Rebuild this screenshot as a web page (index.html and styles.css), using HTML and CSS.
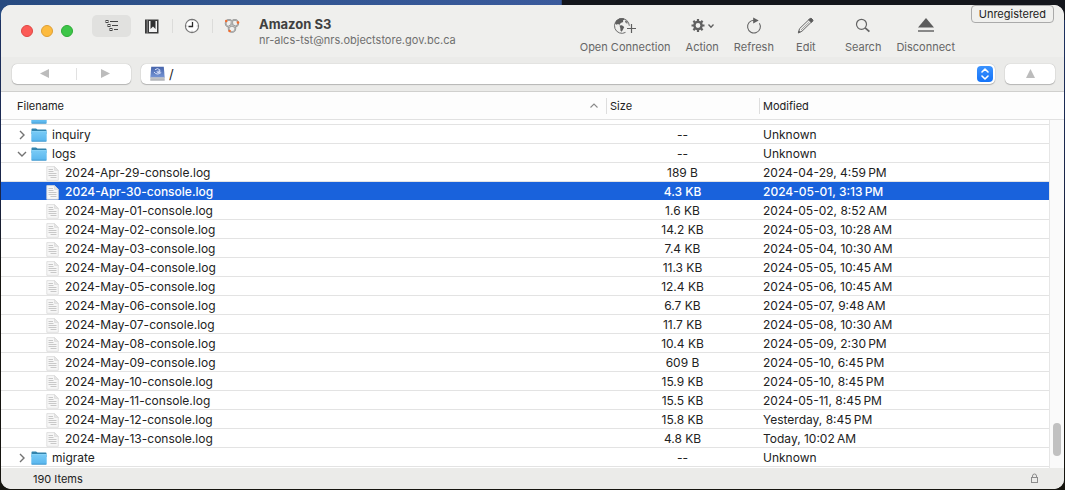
FILE: index.html
```html
<!DOCTYPE html>
<html lang="en">
<head>
<meta charset="utf-8">
<title>Amazon S3</title>
<link rel="stylesheet" href="styles.css">
<script src="files.js" defer></script>
</head>
<body>
<svg class="symbols" aria-hidden="true">
  <defs>
    <linearGradient id="folder-fill" x1="0" y1="0" x2="0" y2="1"><stop offset="0" stop-color="#79cbf6"/><stop offset="1" stop-color="#58b6ee"/></linearGradient>
    <linearGradient id="disk-fill" x1="0" y1="0" x2="0" y2="1"><stop offset="0" stop-color="#4765ab"/><stop offset="1" stop-color="#7796d6"/></linearGradient>
  </defs>
  <symbol id="folder" viewBox="0 0 16 14">
    <path d="M.5 2.2V1.3Q.5.5 1.3.5H5l1.500 1h8.2q.8 0 .8.8V6H.5z" fill="#3183ad"/>
    <path d="M.3 3.2h15.4v9.4q0 .9-.9.9H1.2q-.9 0-.9-.9z" fill="url(#folder-fill)"/>
    <path d="M.3 3.5h15.4" stroke="#95dcff" stroke-width=".7"/>
    <path d="M.6 13.2h14.8" stroke="#3d93c6" stroke-width=".8"/>
  </symbol>
  <symbol id="document" viewBox="0 0 13 15">
    <path d="M.8.6h7.700L12.300 4.400v9.900H.8z" fill="#f7f7f7" stroke="#d9d9d9" stroke-width=".8"/>
    <path d="M8.500.6v3.800h3.800z" fill="#e6e6e6" stroke="#d2d2d2" stroke-width=".5"/>
    <path d="M2.500 3.500h4.500M2.500 5.500h5M2.500 7.500h8M2.500 9.500h8M4.500 11.500h6" stroke="#c2c2c2" stroke-width=".9"/>
  </symbol>
</svg>
<main class="window">
  <header class="toolbar">
    <div class="lights">
      <button class="light close" aria-label="Close"></button>
      <button class="light minimize" aria-label="Minimize"></button>
      <button class="light expand" aria-label="Zoom"></button>
    </div>
    <div class="views">
      <button class="view active" aria-label="Outline">
        <svg width="14" height="14" viewBox="0 0 14 14" fill="none" stroke="#454545"><rect x="1" y="1.5" width="2" height="2"/><rect x="3" y="5.5" width="2" height="2"/><rect x="5" y="9.5" width="2" height="2"/><path d="M5 2.5h8M7 6.5h6M9 10.5h4"/></svg>
      </button>
      <button class="view" aria-label="Bookmarks">
        <svg width="14" height="15" viewBox="0 0 14 15"><path d="M0 .5h13.5v14H0z" fill="#3a3a3a"/><path d="M2.200.5v14" stroke="#a5a5a5" stroke-width=".8"/><path d="M4 2h8v11H4z" fill="#f3f3f3"/><path d="M5.500 2h5v8L8 7.500 5.500 10z" fill="#303030"/></svg>
      </button>
      <span class="rule"></span>
      <button class="view" aria-label="History">
        <svg width="16" height="16" viewBox="0 0 16 16"><circle cx="8" cy="8" r="6.6" fill="#fff" stroke="#777" stroke-width="1.1"/><path d="M8.500 4v4.500H4.500" fill="none" stroke="#292929" stroke-width="1.3"/><path d="M8 2.4v.8M8 12.8v.8M2.4 8h.8M12.8 8h.8" stroke="#777"/></svg>
      </button>
      <span class="rule"></span>
      <button class="view" aria-label="Bonjour">
        <svg width="16" height="16" viewBox="0 0 16 16" fill="none"><g stroke="#8a8a8a" stroke-width="1.7"><circle cx="5" cy="5.2" r="3.4"/><circle cx="10.8" cy="5.2" r="3.4"/><circle cx="8" cy="10.6" r="3.4"/></g><g stroke="#d4d4d3" stroke-width=".5"><circle cx="5" cy="5.2" r="3.4"/><circle cx="10.8" cy="5.2" r="3.4"/><circle cx="8" cy="10.6" r="3.4"/></g><g fill="#f36b2c"><circle cx="2.2" cy="3" r="1.2"/><circle cx="14" cy="4.500" r="1.3"/><circle cx="5.6" cy="13" r="1.3"/></g></svg>
      </button>
    </div>
    <div class="title">
      <h1>Amazon S3</h1>
      <p>nr-alcs-tst@nrs.objectstore.gov.bc.ca</p>
    </div>
    <nav class="actions">
      <button class="action">
        <svg width="24" height="18" viewBox="0 0 24 18"><path d="M12.500 15.400A7.400 7.400 0 1 1 16.300 8.800" fill="none" stroke="#6c6c6c"/><path d="M3.2 3.4 6.5 1.2l4 .1 1 1.3-1.6.8.3 1.5-2.5 1.2-1 1.600-2-.8-.8.8 1.6 1.2L2 6.500z" fill="#5f5f5f"/><path d="m6.500 8.600 2.400-.3 2.400 1.800-1.200 2.200-1.300 2.500-1.300-1-.2-2.800z" fill="#5f5f5f"/><path d="m12 3.500 2 .8 1 2-1.500.2-1.500-1.500z" fill="#787878"/><path d="M18.500 7v9M14 11.500h9" stroke="#5f5f5f" stroke-width="1.2"/></svg>
        Open Connection</button>
      <button class="action">
        <svg width="24" height="18" viewBox="0 0 24 18" fill="none" stroke="#606060"><circle cx="8" cy="8.500" r="3.600" stroke-width="2.4"/><path stroke-width="2.2" d="M8 4.500V2M8 15v-2.500M4 8.500H1.500M14.500 8.500H12M5.2 5.7 3.4 3.9M12.6 13.1l-1.8-1.8M5.2 11.3l-1.8 1.8M12.6 3.9l-1.8 1.8"/><path d="m18.500 7.500 2.500 2.700 2.500-2.700" stroke-width="1.3"/></svg>
        Action</button>
      <button class="action">
        <svg width="18" height="18" viewBox="0 0 18 18"><path d="M14.400 6.200A6.400 6.400 0 1 1 9 3.200" fill="none" stroke="#666" stroke-width="1.1"/><path d="M8.2.500 13.7 3.500 8.2 6.400z" fill="#5f5f5f"/></svg>
        Refresh</button>
      <button class="action edit">
        <svg width="18" height="18" viewBox="0 0 18 18" fill="none" stroke="#666"><path d="m1.500 15.700 1-4L12.8 1.8q1-.9 2.2.2 1.3 1.2.3 2.2L5 14.2z"/><path d="M4 13 12.3 5" stroke-width=".6"/><path d="m12.6 1.9 1.4-.7 2 1.8-.3 1.2-1.4 1.2-2.7-2.4z" fill="#5a5a5a"/><path d="m1.3 15.900.6-2 1.2 1.400z" fill="#555"/></svg>
        Edit</button>
      <button class="action search">
        <svg width="18" height="18" viewBox="0 0 18 18" fill="none" stroke="#646464"><circle cx="7.500" cy="7.300" r="5" stroke-width="1.2"/><path d="m11.200 10.900 4.200 3.800" stroke-width="1.8"/></svg>
        Search</button>
      <button class="action">
        <svg width="18" height="18" viewBox="0 0 18 18"><path d="M9 1 17 10.500H1z" fill="#5c5c5c"/><path d="M1 14h16" stroke="#666" stroke-width="1.4"/></svg>
        Disconnect</button>
    </nav>
    <button class="badge">Unregistered</button>
  </header>

  <div class="location">
    <div class="segments">
      <button class="back" aria-label="Back"><svg width="9" height="9" viewBox="0 0 9 9"><path d="M9 0v9L0 4.500z"/></svg></button>
      <button class="forward" aria-label="Forward"><svg width="9" height="9" viewBox="0 0 9 9"><path d="M0 0v9l9-4.500z"/></svg></button>
    </div>
    <div class="path">
      <svg width="15" height="15" viewBox="0 0 15 15"><path d="M1.2.8h12.6l.9 11H.3z" fill="url(#disk-fill)"/><path d="M.3 11.3h14.4v3H.3z" fill="#bfc1c5"/><path d="M.3 14.2h14.4" stroke="#8d9096" stroke-width=".6"/><path d="M5 3.8q2.500-2.400 4.800 0v2.700M9.8 5.4q-2.900-1-2.900.4 0 1.600 2.900.5M4 6q3 3.800 7.200.5" fill="none" stroke="#e3eaff" stroke-width=".9"/></svg>
      <input type="text" value="/" aria-label="Path">
      <button class="stepper" aria-label="Show path menu"><svg width="10" height="12" viewBox="0 0 10 12" fill="none" stroke="#fff" stroke-width="1.6" stroke-linecap="round" stroke-linejoin="round"><path d="m2 4 3-3 3 3M2 8l3 3 3-3"/></svg></button>
    </div>
    <button class="up" aria-label="Parent folder"><svg width="9" height="9" viewBox="0 0 9 9"><path d="M0 9h9L4.500 0z"/></svg></button>
  </div>

  <section class="browser">
    <table>
      <colgroup><col><col class="size-col"><col class="date-col"></colgroup>
      <thead>
        <tr>
          <th><span class="heading">Filename<svg width="8" height="5" viewBox="0 0 8 5" fill="none" stroke="#8b8b8b" stroke-width="1.1"><path d="M.5 4.500 4 1l3.500 3.500"/></svg></span></th>
          <th><span class="heading ruled">Size</span></th>
          <th><span class="heading ruled">Modified</span></th>
        </tr>
      </thead>
      <tbody id="files">
        <tr class="clipped"><td colspan="3"><div><svg width="16" height="14"><use href="#folder"/></svg></div></td></tr>
      </tbody>
    </table>
    <div class="track"><div class="thumb"></div></div>
  </section>

  <footer class="status">
    <span>190 Items</span>
    <svg width="9" height="11" viewBox="0 0 9 11" fill="none" stroke="#8c8c8c"><rect x="1.500" y="4.500" width="6" height="5"/><path d="M2.500 4.500V3q0-2 2-2t2 2v1.500"/></svg>
  </footer>
</main>
</body>
</html>
```
FILE: files.js
```js
const entries = [
  ["inquiry", "--", "Unknown", "closed"],
  ["logs", "--", "Unknown", "open"],
  ["2024-Apr-29-console.log", "189 B", "2024-04-29, 4:59\u2009PM"],
  ["2024-Apr-30-console.log", "4.3 KB", "2024-05-01, 3:13\u2009PM", "selected"],
  ["2024-May-01-console.log", "1.6 KB", "2024-05-02, 8:52\u2009AM"],
  ["2024-May-02-console.log", "14.2 KB", "2024-05-03, 10:28\u2009AM"],
  ["2024-May-03-console.log", "7.4 KB", "2024-05-04, 10:30\u2009AM"],
  ["2024-May-04-console.log", "11.3 KB", "2024-05-05, 10:45\u2009AM"],
  ["2024-May-05-console.log", "12.4 KB", "2024-05-06, 10:45\u2009AM"],
  ["2024-May-06-console.log", "6.7 KB", "2024-05-07, 9:48\u2009AM"],
  ["2024-May-07-console.log", "11.7 KB", "2024-05-08, 10:30\u2009AM"],
  ["2024-May-08-console.log", "10.4 KB", "2024-05-09, 2:30\u2009PM"],
  ["2024-May-09-console.log", "609 B", "2024-05-10, 6:45\u2009PM"],
  ["2024-May-10-console.log", "15.9 KB", "2024-05-10, 8:45\u2009PM"],
  ["2024-May-11-console.log", "15.5 KB", "2024-05-11, 8:45\u2009PM"],
  ["2024-May-12-console.log", "15.8 KB", "Yesterday, 8:45\u2009PM"],
  ["2024-May-13-console.log", "4.8 KB", "Today, 10:02\u2009AM"],
  ["migrate", "--", "Unknown", "closed"],
];

const arrows = { closed: "M3 1l4 4-4 4", open: "M1 3l4 4 4-4" };

document.getElementById("files").insertAdjacentHTML("beforeend", entries.map(([name, size, date, state]) => {
  const arrow = arrows[state];
  const icon = arrow
    ? `<button class="disclosure" aria-label="Toggle ${name}"><svg width="10" height="10" viewBox="0 0 10 10"><path d="${arrow}"/></svg></button><svg width="16" height="14"><use href="#folder"/></svg>`
    : `<svg width="13" height="15"><use href="#document"/></svg>`;
  return `<tr class="entry ${state === "selected" ? "selected" : ""}"><td><div class="name ${arrow ? "folder" : "file"}">${icon}<span>${name}</span></div></td><td class="size">${size}</td><td class="date">${date}</td></tr>`;
}).join(""));
```
FILE: styles.css
```css
* { box-sizing: border-box; }

body {
  margin: 0;
  min-height: 100vh;
  display: flex;
  padding: 5px 1px 1px;
  font: 12px/18px Inter, "Liberation Sans", sans-serif;
  color: #222;
  background:
    linear-gradient(90deg, #274a80, #30548f 20%, #3a5a9c 52.7%, #14161c 52.8%) top / 100% 20px no-repeat,
    linear-gradient(#1d3263, #1a2547 40%, #15140f 55%, #15140f);
}

button {
  margin: 0;
  padding: 0;
  border: 0;
  background: none;
  font: inherit;
  color: inherit;
}

svg { display: block; flex: none; }
.symbols { position: absolute; width: 0; height: 0; }

.window {
  flex: 1;
  min-width: 0;
  display: flex;
  flex-direction: column;
  overflow: hidden;
  border-radius: 10px;
  background: #fff;
}

.toolbar {
  position: relative;
  display: flex;
  align-items: flex-start;
  height: 52px;
  padding: 10px 109px 0 20px;
  background: #efefed;
}

.lights { display: flex; gap: 8px; padding-top: 10px; }
.light { width: 12px; height: 12px; border-radius: 50%; border: 1px solid; }
.close { background: #fc5b57; border-color: #df4744; }
.minimize { background: #fdbb3f; border-color: #de9f34; }
.expand { background: #3dc648; border-color: #2dab36; }

.views { display: flex; align-items: center; margin-left: 19px; }
.view { display: grid; place-items: center; width: 40px; height: 22px; border-radius: 5px; }
.active { width: 39px; margin-right: 1px; background: #e1e1df; }
.rule { width: 1px; height: 14px; margin-right: -1px; background: #dcdcda; }

.title { flex: 1; min-width: 0; padding: 0 8px 0 7px; white-space: nowrap; }
.title h1 { margin: 0; font-size: 13px; line-height: 18px; font-weight: 700; color: #404040; }
.title p { margin: 0; font-size: 11px; line-height: 15px; color: #6f6f6f; }

.actions { display: flex; gap: 15px; padding-top: 2px; }
.action {
  display: flex;
  flex-direction: column;
  align-items: center;
  gap: 3px;
  font-size: 11px;
  line-height: 18px;
  color: #666;
  white-space: nowrap;
}
.edit { width: 34px; }
.search { margin-left: 7px; }

.badge {
  position: absolute;
  top: 0;
  right: 10px;
  height: 18px;
  padding: 0 7px;
  border: 1px solid #aaa;
  border-radius: 4px;
  background: #f0f0ee;
  font-size: 11px;
  line-height: 16px;
}

.location {
  display: flex;
  align-items: center;
  gap: 10px;
  height: 35px;
  padding: 0 9px 1px 11px;
  border-bottom: 1px solid #d0d0ce;
  background: #ebebe9;
}
.segments, .up, .path {
  display: flex;
  align-items: center;
  height: 20px;
  border-radius: 5px;
  background: #fff;
  box-shadow: 0 0 1px #0005, 0 1px 1px #0003;
}
.segments { width: 119px; }
.segments button { display: flex; align-items: center; height: 12px; }
.segments .back { width: 64px; justify-content: center; }
.segments .forward { flex: 1; padding-left: 24px; border-left: 1px solid #e1e1e1; }
.segments svg, .up svg { fill: #bcbcbc; }
.path { flex: 1; padding: 0 2px 0 9px; }
.path input { flex: 1; min-width: 0; padding: 0 4px; border: 0; outline: 0; background: none; font: 13px/18px Inter, sans-serif; color: #222; }
.stepper { display: grid; place-items: center; width: 16px; height: 16px; border-radius: 4px; background: linear-gradient(#3b93ff, #1473f8); }
.up { justify-content: center; width: 50px; }

.browser { position: relative; flex: 1; overflow: hidden; background: #fff; }
table { width: 100%; table-layout: fixed; border-collapse: separate; border-spacing: 0; }
.size-col { width: 153px; }
.date-col { width: 305px; }
th { padding: 0; height: 28px; border-bottom: 1px solid #e1e1e1; text-align: left; font-size: 11px; font-weight: 400; background: #fdfdfd; }
.heading { display: flex; align-items: center; justify-content: space-between; height: 16px; padding: 0 8px 0 16px; }
.ruled { padding-left: 3px; border-left: 1px solid #dedede; }
td { padding: 0; border-bottom: 1px solid #e3e3e3; white-space: nowrap; }
.entry td { height: 19px; padding-top: 2px; line-height: 16px; }
.clipped td { height: 5px; line-height: 0; }
.clipped div { display: flex; align-items: flex-end; height: 4px; padding-left: 30px; overflow: hidden; }
.name { display: flex; align-items: center; height: 16px; }
.folder { gap: 5px; padding-left: 16px; }
.file { gap: 6px; padding-left: 45px; }
.disclosure { width: 10px; height: 10px; margin-right: -1px; }
.disclosure path { fill: none; stroke: #737373; stroke-width: 1.4; }
.size { text-align: center; }
.date { padding-left: 4px; }
.selected td { background: #1962dc; border-color: #fff; background-clip: padding-box; color: #fff; font-weight: 500; }

.track { position: absolute; top: 28px; right: 0; bottom: 0; width: 15px; padding-right: 3px; border-left: 1px solid #e6e6e6; background: #fafafa; display: flex; flex-direction: column; align-items: flex-end; justify-content: flex-end; }
.thumb { width: 8px; height: 33px; margin-bottom: 12px; border-radius: 4px; background: #c1c1c1; }

.status {
  display: flex;
  align-items: center;
  justify-content: space-between;
  height: 21px;
  padding: 0 25px 0 32px;
  background: #ebebe9;
  font-size: 11px;
}
```
